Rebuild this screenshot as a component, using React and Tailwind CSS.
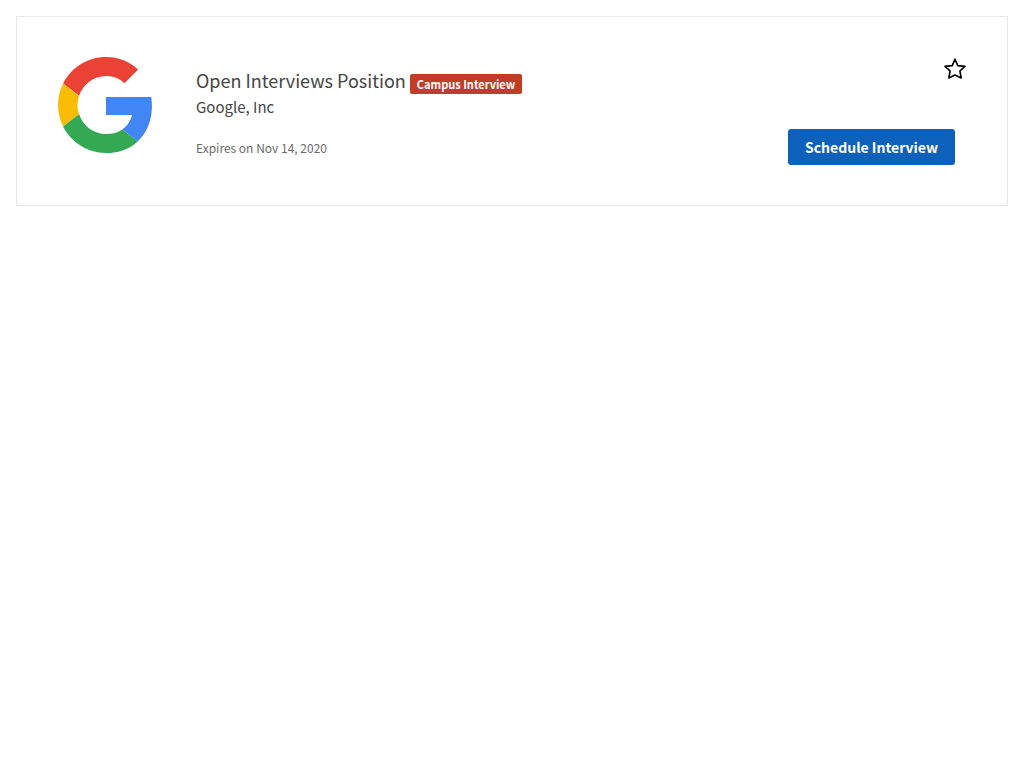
function GoogleLogo() {
  return (
    <svg viewBox="0 0 48 48" className="h-24 w-24 shrink-0" role="img" aria-label="Google">
      <path fill="#EA4335" d="M24 9.5c3.54 0 6.71 1.22 9.21 3.6l6.85-6.85C35.9 2.38 30.47 0 24 0 14.62 0 6.51 5.38 2.56 13.22l7.98 6.19C12.43 13.72 17.74 9.5 24 9.5z" />
      <path fill="#4285F4" d="M46.98 24.55c0-1.57-.15-3.09-.38-4.55H24v9.02h12.94c-.58 2.96-2.26 5.48-4.78 7.18l7.73 6c4.51-4.18 7.09-10.36 7.09-17.65z" />
      <path fill="#FBBC05" d="M10.53 28.59c-.48-1.45-.76-2.99-.76-4.59s.27-3.14.76-4.59l-7.98-6.19C.92 16.46 0 20.12 0 24c0 3.88.92 7.54 2.56 10.78l7.97-6.19z" />
      <path fill="#34A853" d="M24 48c6.48 0 11.93-2.13 15.89-5.81l-7.73-6c-2.15 1.45-4.92 2.3-8.16 2.3-6.26 0-11.57-4.22-13.47-9.91l-7.98 6.19C6.51 42.62 14.62 48 24 48z" />
    </svg>
  );
}

function StarIcon() {
  return (
    <svg viewBox="0 0 24 24" className="h-6 w-6" fill="none" stroke="black" strokeWidth="1.6" strokeLinejoin="round" aria-hidden="true">
      <path d="M12 2.2 L14.8 8.6 L22 9.4 L16.9 14 L18.2 21 L12 18 L5.8 21 L7.1 14 L2 9.4 L9.2 8.6 Z" />
    </svg>
  );
}

export default function App() {
  return (
    <main className="p-4 font-['Source_Sans_Pro','Noto_Sans_CJK_SC',sans-serif]">
      <article className="flex items-start justify-between border border-[#e8e8e8] bg-white py-10 pr-10 pl-[41px]">
        <div className="flex items-start gap-[42px]">
          <GoogleLogo />
          <div className="pt-[11px] text-[#444444]">
            <div className="flex items-start gap-1">
              <h1 className="text-[18px] leading-6">Open Interviews Position</h1>
              <span className="mt-1.5 rounded-xs bg-[#c13d24] px-[7px] text-[11px] leading-5 font-bold text-white">
                Campus Interview
              </span>
            </div>
            <p className="mt-px text-[15px] leading-6">Google, Inc</p>
            <p className="mt-[17px] text-[12px] leading-6 text-[#6b6b6b]">Expires on Nov 14, 2020</p>
          </div>
        </div>
        <div className="flex flex-col items-end gap-12">
          <button type="button" aria-label="Save position">
            <StarIcon />
          </button>
          <button type="button" className="mr-3 rounded-[3px] bg-[#0e61ba] px-[17px] py-1.5 text-[14px] leading-6 font-bold text-white">
            Schedule Interview
          </button>
        </div>
      </article>
    </main>
  );
}
